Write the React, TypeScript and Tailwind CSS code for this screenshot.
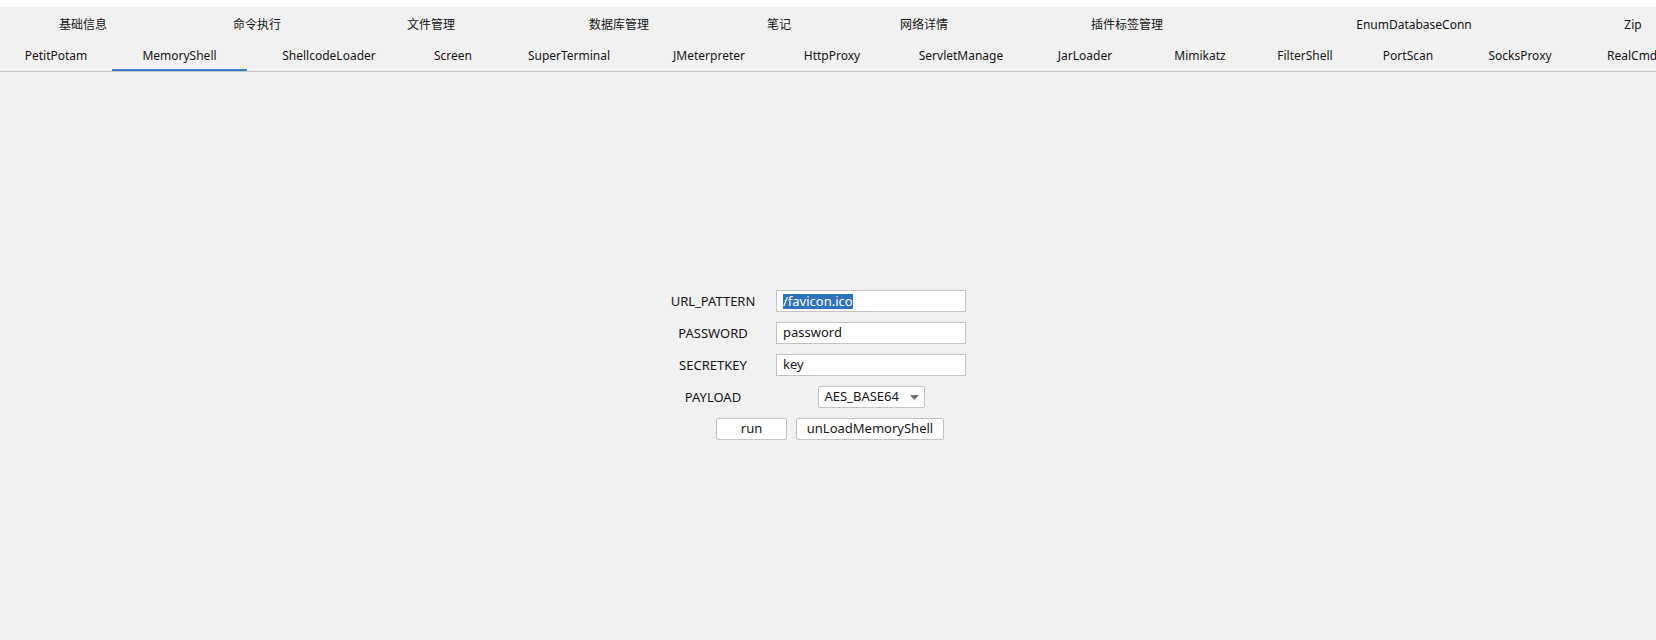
import React from 'react';

const topTabs = [
  { label: '基础信息', w: 166 },
  { label: '命令执行', w: 182 },
  { label: '文件管理', w: 166 },
  { label: '数据库管理', w: 210 },
  { label: '笔记', w: 110 },
  { label: '网络详情', w: 180 },
  { label: '插件标签管理', w: 226 },
  { label: 'EnumDatabaseConn', w: 348 },
  { label: 'Zip', w: 90 },
];

const pluginTabs = [
  { label: 'PetitPotam', w: 112 },
  { label: 'MemoryShell', w: 135 },
  { label: 'ShellcodeLoader', w: 164 },
  { label: 'Screen', w: 84 },
  { label: 'SuperTerminal', w: 148 },
  { label: 'JMeterpreter', w: 132 },
  { label: 'HttpProxy', w: 114 },
  { label: 'ServletManage', w: 144 },
  { label: 'JarLoader', w: 104 },
  { label: 'Mimikatz', w: 126 },
  { label: 'FilterShell', w: 84 },
  { label: 'PortScan', w: 122 },
  { label: 'SocksProxy', w: 102 },
];

const fields = [
  { label: 'URL_PATTERN', value: '/favicon.ico', selected: true },
  { label: 'PASSWORD', value: 'password' },
  { label: 'SECRETKEY', value: 'key' },
];

export default function App() {
  return (
    <div
      className="w-[1656px] h-[640px] overflow-hidden bg-[#f1f1f1] text-[#161616]"
      style={{ fontFamily: '"Noto Sans", "Noto Sans CJK SC", sans-serif' }}
    >
      <div className="h-[7px] bg-white" />

      {/* main tabs */}
      <div className="flex h-[33px] pt-[2px] text-[12px] whitespace-nowrap">
        {topTabs.map((t) => (
          <div key={t.label} className="flex shrink-0 items-center justify-center" style={{ width: t.w }}>
            {t.label}
          </div>
        ))}
      </div>

      {/* plugin tabs */}
      <div className="flex border-b border-[#c6c6c6] text-[12px] whitespace-nowrap">
        {pluginTabs.map((t) => (
          <div
            key={t.label}
            className={
              t.label === 'MemoryShell'
                ? 'flex h-[31px] shrink-0 items-center justify-center border-b-2 border-[#3d7cc4] pt-[3px]'
                : 'flex h-[31px] shrink-0 items-center justify-center border-b-2 border-transparent pt-[3px]'
            }
            style={{ width: t.w }}
          >
            {t.label}
          </div>
        ))}
        <div className="flex h-[31px] shrink-0 items-center border-b-2 border-transparent pl-[36px] pt-[3px]">RealCmd</div>
      </div>

      {/* memory shell form */}
      <div className="pl-[650px] pt-[218px] text-[13px]">
        <div className="flex flex-col gap-[10px]">
          {fields.map((f) => (
            <div key={f.label} className="flex items-center">
              <div className="w-[126px] pt-[1px] text-center">{f.label}</div>
              <div className="flex h-[22px] w-[190px] items-center border border-[#c3c3c3] bg-white pl-[6px]">
                {f.selected ? (
                  <span className="bg-[#2f72c0] leading-[15px] text-white">{f.value}</span>
                ) : (
                  <span>{f.value}</span>
                )}
              </div>
            </div>
          ))}

          <div className="flex items-center">
            <div className="w-[126px] pt-[1px] text-center">PAYLOAD</div>
            <div className="flex w-[190px] justify-center">
              <div className="flex h-[22px] w-[107px] items-center justify-between rounded-[2px] border border-[#c3c3c3] bg-white pl-[6px] pr-[5px]">
                <span>AES_BASE64</span>
                <svg width="9" height="5" viewBox="0 0 9 5">
                  <path d="M0 0 L9 0 L4.5 5 Z" fill="#6f6f6f" />
                </svg>
              </div>
            </div>
          </div>

          <div className="flex gap-[9px] pl-[66px]">
            <button className="h-[22px] w-[71px] rounded-[2px] border border-[#c3c3c3] bg-white">run</button>
            <button className="h-[22px] w-[148px] rounded-[2px] border border-[#c3c3c3] bg-white">unLoadMemoryShell</button>
          </div>
        </div>
      </div>
    </div>
  );
}
